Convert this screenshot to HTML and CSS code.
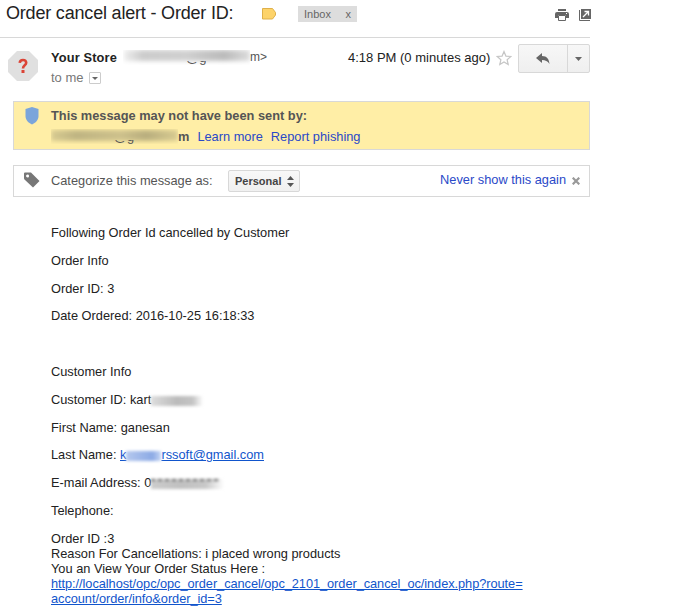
FILE: index.html
```html
<!DOCTYPE html>
<html lang="en">
<head>
<meta charset="utf-8">
<title>Order cancel alert</title>
<link rel="stylesheet" href="styles.css">
</head>
<body>
<main class="mail">
  <header class="subject">
    <h1>Order cancel alert - Order ID:</h1>
    <svg class="marker" width="14" height="12" viewBox="0 0 14 12"><path d="M.5.5h10l3 4v2.500l-3 4H.5z" fill="#fdd36a" stroke="#dfb04a"/></svg>
    <span class="label"><span>Inbox</span><span>x</span></span>
    <span class="tools">
      <svg width="14" height="12" viewBox="0 0 14 12"><path d="M3 0h8v2H3zM2 3h10q2 0 2 2v4h-3V6H3v3H0V5q0-2 2-2z" fill="#666"/><path d="M3.500 6.500h7v5h-7z" fill="#fff" stroke="#666"/><path d="M11 4h1v1h-1z" fill="#fff"/></svg>
      <svg width="12" height="12" viewBox="0 0 12 12"><path d="M2 0h10v10H2z" fill="#666"/><path d="M.5 1v10.500H11" fill="none" stroke="#666"/><path d="M4 8l5-5M5.500 2.500h4v4" fill="none" stroke="#fff" stroke-width="1.300"/></svg>
    </span>
  </header>

  <section class="sender">
    <svg class="avatar" width="30" height="30" viewBox="0 0 30 30"><path d="M9 0h12l9 9v12l-9 9H9l-9-9V9z" fill="#e0e0e0"/><path d="M11.700 11.800Q12 9 15 9t3.200 2.700c0 2.700-3.200 2.500-3.200 5.800" fill="none" stroke="#db4437" stroke-width="2.600"/><path d="M13.500 19h3v3h-3z" fill="#db4437"/></svg>
    <div class="who">
      <div class="from"><b>Your Store</b><span class="hidden-address"><i class="smudge"></i><span class="tail">@g</span></span><span class="end">m&gt;</span></div>
      <div class="to">to me <span class="details"><svg width="6" height="3" viewBox="0 0 6 3"><path d="M0 0h6L3 3z" fill="#666"/></svg></span></div>
    </div>
    <time>4:18 PM (0 minutes ago)</time>
    <svg class="star" width="16" height="16" viewBox="0 0 16 16"><path d="M8 1.500l1.900 4.600 4.900.4-3.700 3.200 1.100 4.800L8 11.900l-4.200 2.600 1.100-4.800-3.700-3.200 4.900-.4z" fill="#fff" stroke="#c6c6c6" stroke-width="1.200"/></svg>
    <div class="actions">
      <span class="reply"><svg width="14" height="12" viewBox="0 0 14 12"><path d="M0 5l6-5v3c5 0 7 3 7.500 8C11.500 8 9.500 7 6 7v3z" fill="#666"/></svg></span>
      <span class="more"><svg width="7" height="4" viewBox="0 0 7 4"><path d="M0 0h7L3.500 4z" fill="#666"/></svg></span>
    </div>
  </section>

  <section class="warning">
    <svg width="14" height="18" viewBox="0 0 14 18"><path d="M7 0l6.500 2v7c0 4-3 7-6.500 8.500C3.500 16 .5 13 .5 9V2z" fill="#7ba5db"/></svg>
    <div>
      <b>This message may not have been sent by:</b>
      <div class="origin"><span class="hidden-address"><i class="smudge"></i><span class="tail">@g</span></span><b>m</b><a>Learn more</a><a>Report phishing</a></div>
    </div>
  </section>

  <section class="category">
    <svg class="tag" width="16" height="16" viewBox="0 0 16 16"><path fill-rule="evenodd" d="M0 1.500Q0 .5 1 .5h6L15.500 9 9 15.500.5 7.500Q0 7 0 6zM3.500 2.500a1.500 1.500 0 1 0 .1 3 1.500 1.500 0 0 0-.1-3z" fill="#777"/></svg>
    <span class="prompt">Categorize this message as:</span>
    <span class="select">Personal <svg width="7" height="11" viewBox="0 0 7 11"><path d="M0 4l3.500-4L7 4zM0 7h7l-3.500 4z" fill="#555"/></svg></span>
    <a>Never show this again</a>
    <svg class="close" width="8" height="8" viewBox="0 0 8 8"><path d="M.7.7l6.600 6.600M7.300.7L.7 7.300" stroke="#999" stroke-width="2.200"/></svg>
  </section>

  <article class="body">
    <p>Following Order Id cancelled by Customer</p>
    <p>Order Info</p>
    <p>Order ID: 3</p>
    <p>Date Ordered: 2016-10-25 16:18:33</p>
    <p>&nbsp;</p>
    <p>Customer Info</p>
    <p>Customer ID: kart<i class="veil veil-id"></i></p>
    <p>First Name: ganesan</p>
    <p>Last Name: <a>k<i class="veil veil-name"></i>rssoft@gmail.com</a></p>
    <p>E-mail Address: 0<i class="veil veil-mail"></i></p>
    <p>Telephone:</p>
    <p>Order ID :3<br>Reason For Cancellations: i placed wrong products<br>You an View Your Order Status Here :<br><a class="status">http://localhost/opc/opc_order_cancel/opc_2101_order_cancel_oc/index.php?route=<br>account/order/info&amp;order_id=3</a></p>
  </article>
</main>
</body>
</html>
```
FILE: styles.css
```css
* { box-sizing: border-box; }
body { margin: 0; background: #fff; color: #222; font: 13px/15px "Liberation Sans", Arial, sans-serif; }
svg { display: block; flex: none; }
a { color: #2a49c8; }
.mail { width: 590px; }

.subject { display: flex; height: 38px; border-bottom: 1px solid #d8d8d8; padding-left: 6px; }
h1 { margin: 3px 0 0; width: 256px; font-size: 18px; letter-spacing: -.19px; line-height: 21px; font-weight: 400; white-space: nowrap; }
.marker { margin-top: 8px; }
.label { display: flex; justify-content: space-between; width: 59px; height: 16px; margin: 6px 0 0 22px; padding: 0 6px; background: #ddd; color: #666; font-size: 11px; line-height: 16px; }
.tools { display: flex; gap: 10px; margin: 9px -1px 0 auto; }

.sender { display: flex; height: 63px; }
.avatar { margin: 13px 0 0 8px; }
.who { width: 297px; margin: 12px 0 0 13px; }
.from { display: flex; color: #555; white-space: nowrap; }
.from b { color: #222; width: 72px; font-size: 12.8px; letter-spacing: .15px; }
.end { font-size: 12px; }
.hidden-address { position: relative; display: block; flex: none; width: 127px; height: 15px; overflow: hidden; }
.smudge { position: absolute; inset: 0 0 4px 1px; background: linear-gradient(90deg, #eee, #ccc 15%, #d0d0d0 50%, #c4c4c4 65%, #bbb 80%, #ddd); filter: blur(2px); }
.tail { position: absolute; left: 63px; top: 0; clip-path: inset(11px 0 0 0); }
.to { margin-top: 5px; display: flex; color: #777; }
.details { width: 12px; height: 12px; margin: 2px 0 0 5px; border: 1px solid #ccc; border-radius: 1px; display: grid; place-items: center; }
time { margin-top: 12px; width: 148px; white-space: nowrap; }
.star { margin-top: 12px; }
.actions { display: flex; width: 72px; height: 29px; margin: 6px 0 0 auto; border: 1px solid #d8d8d8; border-radius: 2px; background: linear-gradient(#f7f7f7, #efefef); }
.reply, .more { display: grid; place-items: center; }
.reply { width: 49px; border-right: 1px solid #d8d8d8; }
.more { flex: 1; }

.warning { display: flex; height: 49px; margin-left: 13px; padding: 5px 0 0 11px; border: 1px solid #d8d8d8; background: #ffeea6; color: #555; font-size: 12.8px; }
.warning > div { margin: 1px 0 0 12px; }
.origin { display: flex; margin-top: 6px; }
.origin a { margin-left: 8px; }
.warning .smudge { inset: 1px 0 3px 0; background: linear-gradient(90deg, #d8cb91, #bfb482 20%, #cec18c 55%, #b9ae7e 75%, #d8cb91); }

.category { display: flex; height: 32px; margin: 15px 0 0 13px; border: 1px solid #d8d8d8; color: #555; font-size: 12.8px; }
.tag { margin: 6px 0 0 10px; }
.prompt { width: 177px; margin: 7px 0 0 11px; }
.select { display: flex; align-items: center; justify-content: space-between; width: 72px; height: 22px; margin-top: 4px; padding: 0 5px 0 6px; border: 1px solid #d8d8d8; border-radius: 2px; background: linear-gradient(#f8f8f8, #f0f0f0); color: #444; font-size: 11px; font-weight: 700; }
.category a { margin: 6px 0 0 auto; }
.close { margin: 11px 9px 0 6px; }

.body { margin: 28px 0 0 51px; font-size: 12.8px; }
.body p { margin: 0 0 12.8px; white-space: nowrap; }
.body a { color: #1155cc; text-decoration: underline; }
.body .status { letter-spacing: -.06px; }
.veil { display: inline-block; height: 10px; vertical-align: -2px; filter: blur(1.5px); }
.veil-id { width: 52px; background: linear-gradient(90deg, #ddd, #bbb 50%, #c4c4c4 80%, #fff); }
.veil-name { width: 35px; background: linear-gradient(90deg, #b5c8ee, #8caae5 75%, #c5d5f4); }
.veil-mail { width: 73px; background: repeating-linear-gradient(90deg, #666 0 4px, #ccc 4px 7px) 0 0 / 68px 2px no-repeat, linear-gradient(90deg, #ccc, #c0c0c0 40%, #c8c8c8 75%, #fff); }
```
